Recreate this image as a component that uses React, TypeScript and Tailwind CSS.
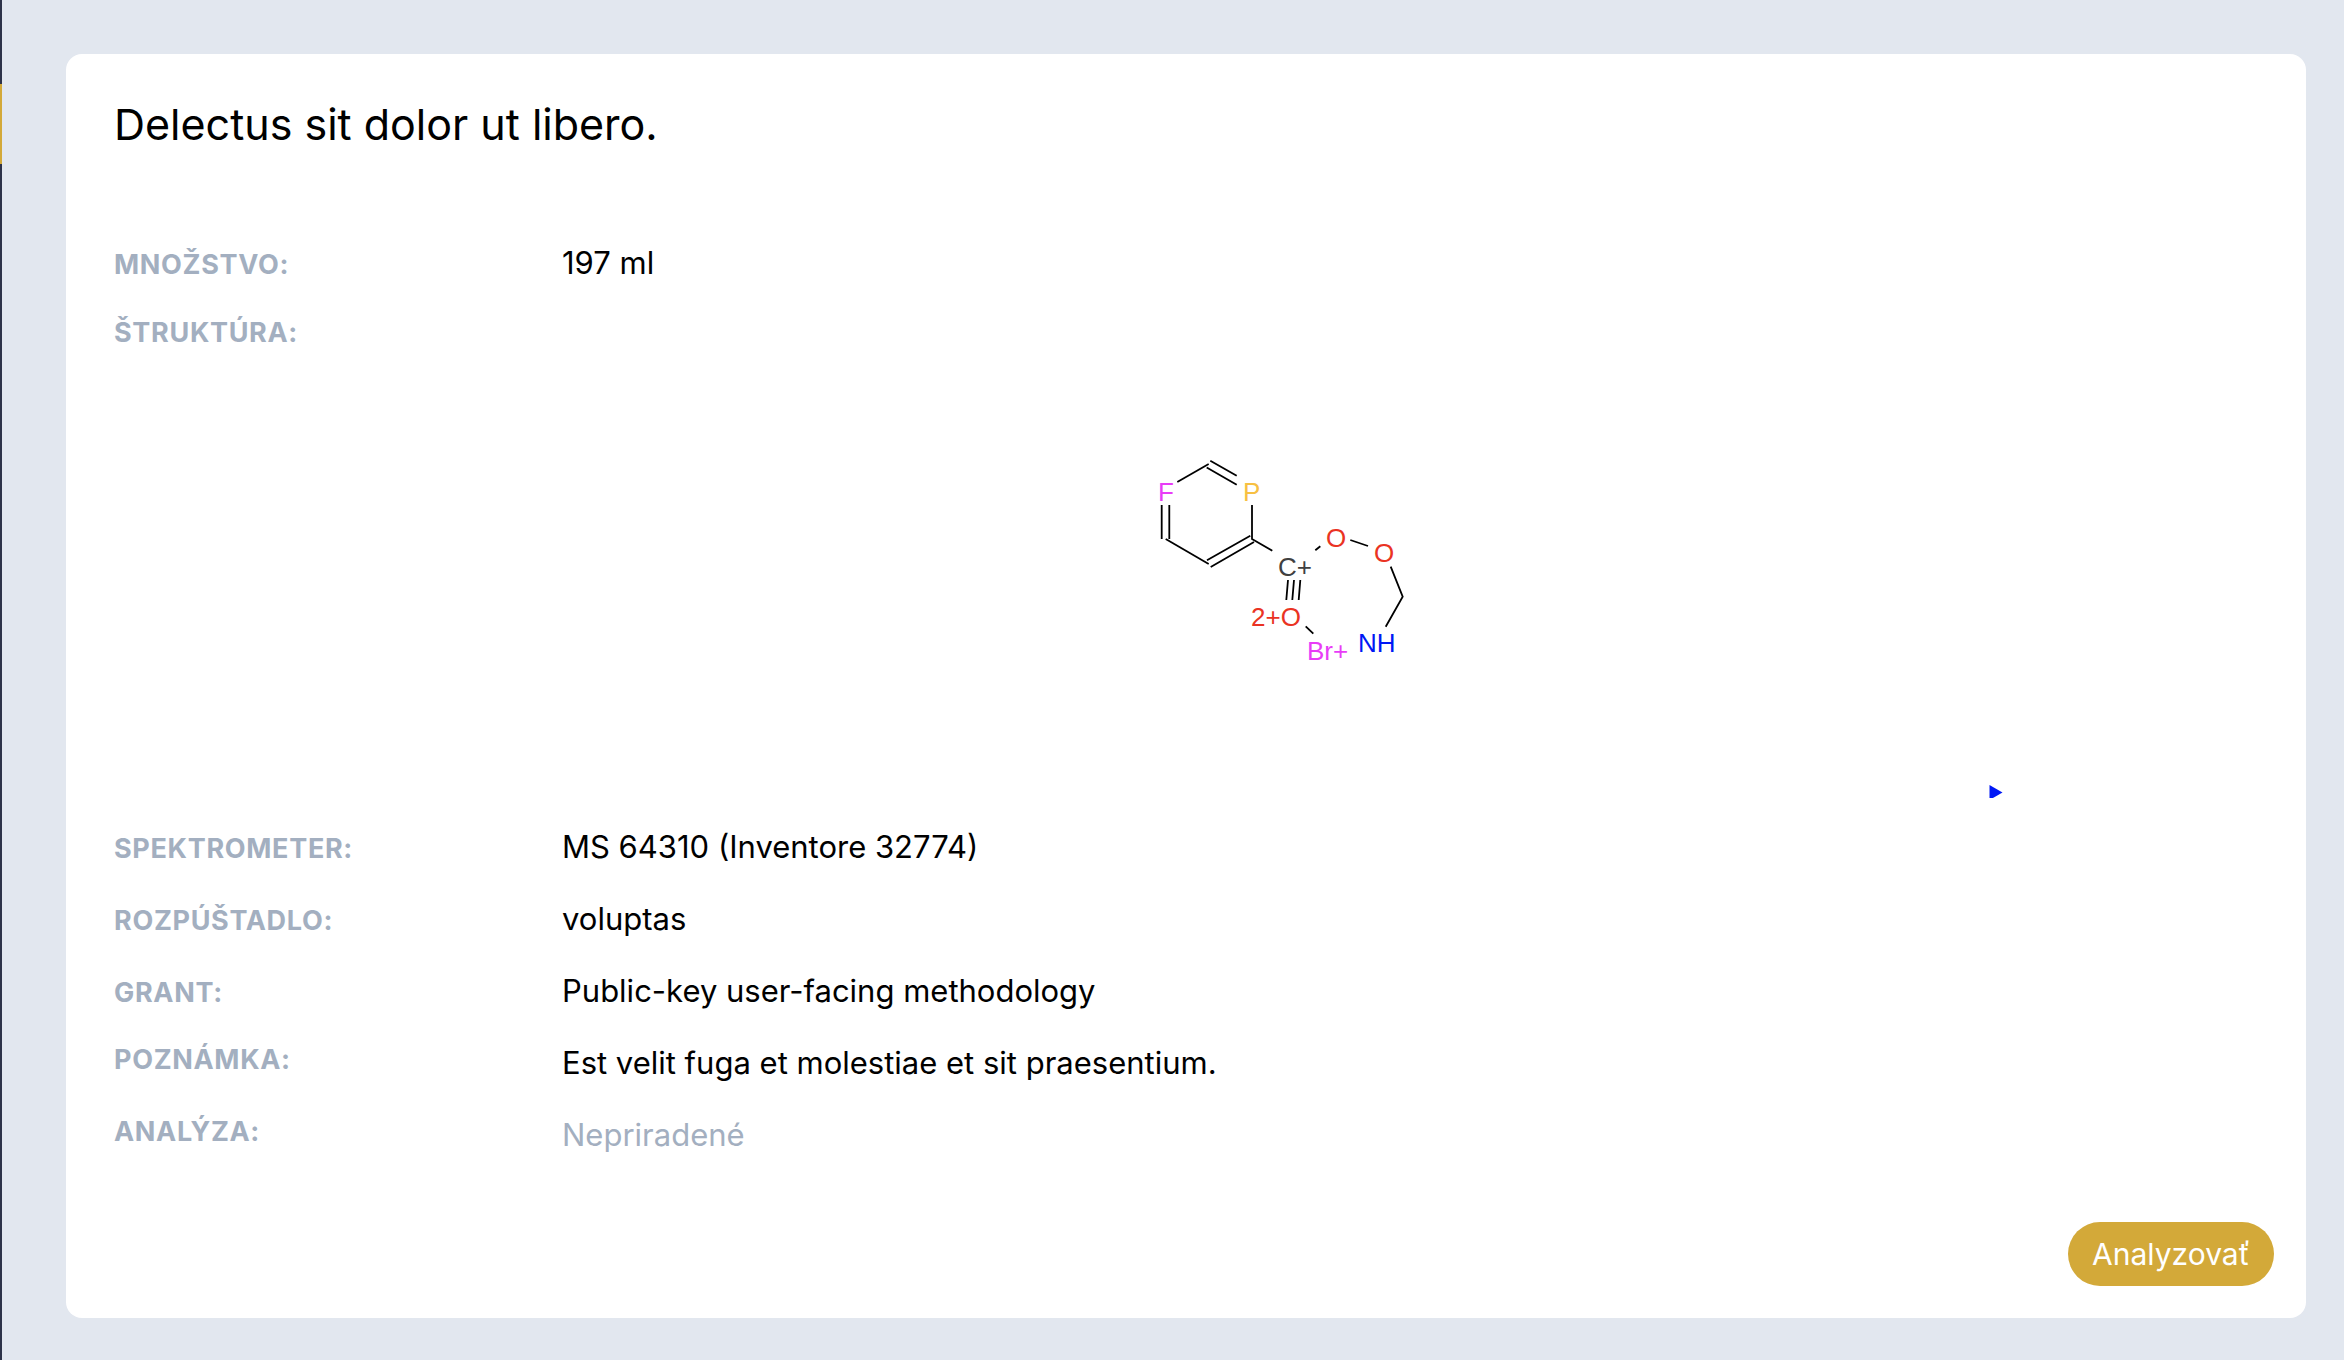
import type { ReactNode } from "react";

function Structure() {
  return (
    <svg
      role="img"
      aria-label="Štruktúra"
      viewBox="562 354 1441 444"
      className="block h-[444px] w-[1441px] max-w-full text-[26px]"
      fontFamily='"Liberation Sans", Arial, sans-serif'
    >
      <g fill="none" stroke="#000" strokeWidth="1.8">
        <path d="M1177.3 482L1208.7 464" />
        <path d="M1210.3 460.7L1236.7 475.7M1206.7 467.5L1236.7 484.7" />
        <path d="M1161.7 505V539M1169.3 505V539" />
        <path d="M1165.7 539L1208.7 564" />
        <path d="M1207 560.3L1250.3 535.7M1210.7 567L1254 542" />
        <path d="M1252 505V539L1272.3 550.7" />
        <path d="M1315.3 550.3L1320.3 546.3" />
        <path d="M1350.3 540L1368 546" />
        <path d="M1390.7 566.7L1402.7 596.7L1385.7 626.7" />
        <path d="M1288 580L1286.3 600M1294 580L1292.3 600M1300.3 580L1298.7 600" />
        <path d="M1305.7 626.3L1313.3 633.7" />
      </g>
      <text x="1158" y="501" fill="#e83cf7">F</text>
      <text x="1243" y="501" fill="#f7c042">P</text>
      <text x="1278" y="576" fill="#404040">C+</text>
      <text x="1326" y="547" fill="#ea3323">O</text>
      <text x="1374" y="562" fill="#ea3323">O</text>
      <text x="1251" y="626" fill="#ea3323">2+O</text>
      <text x="1307" y="660" fill="#e83cf7">Br+</text>
      <text x="1358" y="652" fill="#0018f5">NH</text>
      <path d="M1989.5 785L2002.5 792.5L1989.5 800Z" fill="#0018f5" />
    </svg>
  );
}

type FieldProps = { label: string; children: ReactNode; top?: boolean };

function Field({ label, children, top = false }: FieldProps) {
  return (
    <div className={top ? "flex items-start" : "flex items-baseline"}>
      <dt className="w-112 shrink-0 text-[27px] leading-[42px] font-bold tracking-wide text-[#a3afc0] uppercase">
        {label}
      </dt>
      <dd className="min-w-0 text-[31px] leading-12 text-black">{children}</dd>
    </div>
  );
}

export default function App() {
  return (
    <div className="flex min-h-screen bg-[#e2e7ef] font-['Inter',sans-serif]">
      <aside className="w-0.5 shrink-0 bg-[#2d3349] pt-21">
        <div className="h-20 bg-[#d3a939]" />
      </aside>
      <main className="flex flex-1 flex-col py-[54px] pr-[38px] pl-16 pb-[42px]">
        <section className="flex flex-1 flex-col rounded-2xl bg-white">
          <h1 className="px-12 pt-10 text-[43px] leading-15 text-black">Delectus sit dolor ut libero.</h1>
          <dl className="flex flex-col px-12 pt-[85px]">
            <Field label="Množstvo:">197 ml</Field>
            <div className="flex flex-col pt-[25px]">
              <dt className="text-[27px] leading-[42px] font-bold tracking-wide text-[#a3afc0] uppercase">
                Štruktúra:
              </dt>
              <dd className="pl-112">
                <Structure />
              </dd>
            </div>
            <div className="flex flex-col gap-6 pt-[25px]">
              <Field label="Spektrometer:">MS 64310 (Inventore 32774)</Field>
              <Field label="Rozpúštadlo:">voluptas</Field>
              <Field label="Grant:">Public-key user-facing methodology</Field>
              <Field label="Poznámka:" top>
                Est velit fuga et molestiae et sit praesentium.
              </Field>
              <Field label="Analýza:" top>
                <span className="text-[#a3afc0]">Nepriradené</span>
              </Field>
            </div>
          </dl>
          <div className="mt-auto flex justify-end p-8">
            <button type="button" className="rounded-full bg-[#d3a939] px-6 py-2 text-[30px] leading-12 text-white">
              Analyzovať
            </button>
          </div>
        </section>
      </main>
    </div>
  );
}
